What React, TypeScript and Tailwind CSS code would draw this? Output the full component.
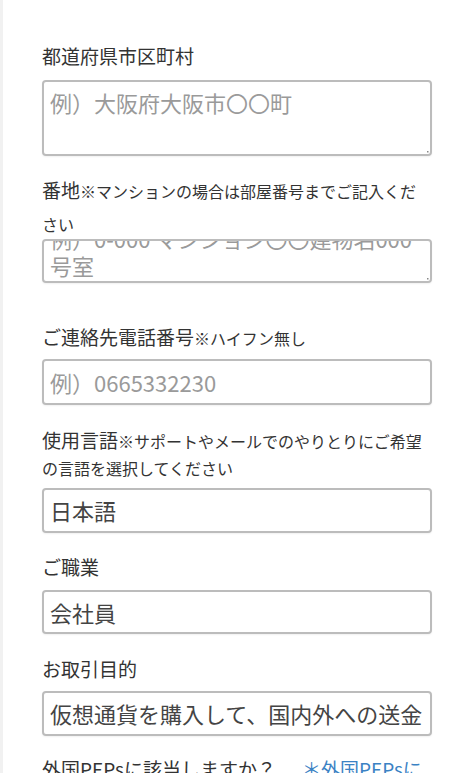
import React from "react";

const font = { fontFamily: '"Noto Sans CJK JP", "Noto Sans", sans-serif' };

function Grip() {
  return (
    <svg
      className="absolute right-[1px] bottom-[1px]"
      width="5"
      height="5"
      viewBox="0 0 5 5"
    >
      <rect x="3" y="3" width="1.5" height="1.5" fill="#888" />
    </svg>
  );
}

function Box({ children, h }: { children: React.ReactNode; h: string }) {
  return (
    <div
      className={`w-[390px] ${h} border-2 border-[#bcbcbc] rounded-[4px] bg-white overflow-hidden flex items-center px-[6px] shadow-[0_1px_2px_rgba(0,0,0,0.06)]`}
    >
      {children}
    </div>
  );
}

export default function App() {
  return (
    <div
      className="w-[469px] h-[773px] overflow-hidden bg-white flex items-start text-[#333]"
      style={font}
    >
      <div className="w-[3px] h-[773px] bg-[#f1f1f1] shrink-0" />
      <div className="block pl-[39px] pt-[41px]">
        {/* 1 */}
        <div className="h-[30px] text-[19px] leading-[30px]">都道府県市区町村</div>
        <div className="relative mt-[9px] w-[390px] h-[76px] border-2 border-[#bcbcbc] rounded-[4px] bg-white px-[6px] pt-[5px] shadow-[0_1px_2px_rgba(0,0,0,0.06)]">
          <div className="text-[22px] leading-[30px] text-[#9a9a9a]">
            例）大阪府大阪市〇〇町
          </div>
          <Grip />
        </div>

        {/* 2 */}
        <div className="mt-[17px] h-[66px] w-[390px] text-[19px] leading-[33px]">
          番地<span className="text-[16px] leading-none">※マンションの場合は部屋番号までご記入ください</span>
        </div>
        <div className="relative w-[390px] h-[44px] border-2 border-[#bcbcbc] rounded-[4px] bg-white overflow-hidden px-[6px] shadow-[0_1px_2px_rgba(0,0,0,0.06)]">
          <div className="mt-[-16px] text-[22px] leading-[27px] text-[#9a9a9a] whitespace-nowrap">
            <div>例）0-000 マンション〇〇建物名000</div>
            <div>号室</div>
          </div>
          <Grip />
        </div>

        {/* 3 */}
        <div className="mt-[39px] h-[30px] text-[19px] leading-[30px]">
          ご連絡先電話番号<span className="text-[16px] leading-none">※ハイフン無し</span>
        </div>
        <div className="mt-[7px]">
          <Box h="h-[46px]">
            <span className="text-[22px] text-[#9a9a9a]">例）0665332230</span>
          </Box>
        </div>

        {/* 4 */}
        <div className="mt-[21px] h-[54px] text-[19px] leading-[27px] w-[390px]">
          使用言語<span className="text-[16px] leading-none">※サポートやメールでのやりとりにご希望の言語を選択してください</span>
        </div>
        <div className="mt-[8px]">
          <Box h="h-[45px]">
            <span className="text-[22px] text-[#444]">日本語</span>
          </Box>
        </div>

        {/* 5 */}
        <div className="mt-[19px] h-[30px] text-[19px] leading-[30px]">ご職業</div>
        <div className="mt-[8px]">
          <Box h="h-[44px]">
            <span className="text-[22px] text-[#444]">会社員</span>
          </Box>
        </div>

        {/* 6 */}
        <div className="mt-[20px] h-[30px] text-[19px] leading-[30px]">お取引目的</div>
        <div className="mt-[7px]">
          <Box h="h-[45px]">
            <span className="text-[22px] text-[#444] whitespace-nowrap">
              仮想通貨を購入して、国内外への送金
            </span>
          </Box>
        </div>

        {/* 7 */}
        <div className="mt-[18px] w-[390px] text-[19px] leading-[30px] flex">
          <span className="whitespace-nowrap">外国PEPsに該当しますか？</span>
          <span className="ml-[26px] w-[125px] text-[#3b82c4]">＊外国PEPsについて</span>
        </div>
      </div>
    </div>
  );
}
